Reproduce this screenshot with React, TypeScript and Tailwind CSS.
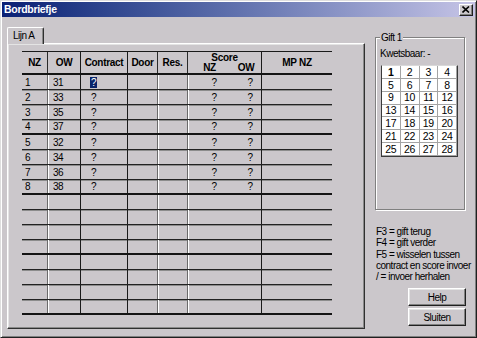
import React from "react";

const rows: { nz: string; ow: string }[] = [
  { nz: "1", ow: "31" },
  { nz: "2", ow: "33" },
  { nz: "3", ow: "35" },
  { nz: "4", ow: "37" },
  { nz: "5", ow: "32" },
  { nz: "6", ow: "34" },
  { nz: "7", ow: "36" },
  { nz: "8", ow: "38" },
  { nz: "", ow: "" },
  { nz: "", ow: "" },
  { nz: "", ow: "" },
  { nz: "", ow: "" },
  { nz: "", ow: "" },
  { nz: "", ow: "" },
  { nz: "", ow: "" },
  { nz: "", ow: "" },
];

function Row({ nz, ow, index }: { nz: string; ow: string; index: number }) {
  const thick = (index + 1) % 4 === 0;
  const filled = nz !== "";
  return (
    <div
      className={
        thick
          ? "flex h-[15px] border-b-2 border-b-[#141414]"
          : "flex h-[15px] border-b border-b-[#222222] shadow-[0_1px_0_#8c8c8c]"
      }
    >
      <div className="flex w-[26px] items-center border-r border-r-[#6a6a6a] pl-[3px]">{nz}</div>
      <div className="flex w-[33px] items-center border-l border-r border-l-white border-r-[#1a1a1a] pl-[4px]">{ow}</div>
      <div className="flex w-[47px] items-center border-r border-r-[#1a1a1a] pl-[9px]">
        {filled ? (
          index === 0 ? (
            <span className="bg-[#0a246a] px-[1px] leading-[11px] text-white">?</span>
          ) : (
            <span className="px-[1px]">?</span>
          )
        ) : null}
      </div>
      <div className="w-[30px] border-r border-r-[#6a6a6a]"></div>
      <div className="w-[30px] border-l border-r border-l-white border-r-[#6a6a6a]"></div>
      <div className="flex w-[74px] items-center border-l border-r border-l-white border-r-[#1a1a1a]">
        <span className="w-[50px] text-center">{filled ? "?" : ""}</span>
        <span className="w-[22px] text-center">{filled ? "?" : ""}</span>
      </div>
      <div className="w-[70px]"></div>
    </div>
  );
}

const btn =
  "flex h-[18px] w-[58px] items-center justify-center self-end border border-t-white border-l-white border-r-[#202020] border-b-[#202020] bg-[#cbc7cb] shadow-[inset_-1px_-1px_0_#808080,inset_1px_1px_0_#e4e4e4]";

export default function App() {
  return (
    <div className="h-[338px] w-[477px] overflow-hidden border border-t-[#dedede] border-l-[#dedede] border-r-[#202020] border-b-[#202020] bg-[#cbc7cb] p-[1px] font-['Liberation_Sans',Arial,sans-serif] text-[10px] tracking-[-0.5px] text-black shadow-[inset_1px_1px_0_#ffffff,inset_-1px_-1px_0_#808080]">
      {/* Title bar */}
      <div className="flex h-[15px] items-center justify-between bg-gradient-to-r from-[#0a1f74] to-[#c6c4e6] pl-[2px] pr-[2px]">
        <span className="text-[10.5px] font-bold leading-[13px] tracking-[-0.3px] text-white">Bordbriefje</span>
        <div className="flex h-[12px] w-[14px] items-center justify-center border border-t-white border-l-white border-r-[#202020] border-b-[#202020] bg-[#cbc7cb] shadow-[inset_-1px_-1px_0_#808080]">
          <svg width="8" height="7" viewBox="0 0 8 7">
            <path d="M0.5 0.5 L7 6.5 M7 0.5 L0.5 6.5" stroke="#000" strokeWidth="1.6" />
          </svg>
        </div>
      </div>

      {/* Body */}
      <div className="flex h-[319px] pl-[5px] pr-[9px]">
        {/* Left column: tab control */}
        <div className="flex w-[358px] flex-col pt-[10px]">
          <div className="relative z-10 -mb-[1px] flex h-[17px] w-[37px] items-center rounded-t-[2px] border-t border-l border-r border-t-white border-l-white border-r-[#303030] bg-[#cbc7cb] pb-[1px] pl-[5px] shadow-[inset_-1px_0_0_#8a8a8a]">
            Lijn A
          </div>
          <div className="h-[286px] w-[358px] border border-t-white border-l-white border-r-[#303030] border-b-[#303030] pl-[14px] pt-[7px] shadow-[inset_-1px_-1px_0_#8a8a8a,inset_1px_1px_0_#e4e4e4]">
            <div className="w-[310px]">
              {/* Header */}
              <div className="flex h-[24px] border-t border-b-2 border-t-[#1a1a1a] border-b-[#141414] font-bold tracking-[-0.3px]">
                <div className="flex w-[26px] items-center justify-center border-r border-r-[#2a2a2a]">NZ</div>
                <div className="flex w-[33px] items-center justify-center border-r border-r-[#1a1a1a]">OW</div>
                <div className="flex w-[47px] items-center justify-center border-r border-r-[#1a1a1a]">Contract</div>
                <div className="flex w-[30px] items-center justify-center border-r border-r-[#2a2a2a]">Door</div>
                <div className="flex w-[30px] items-center justify-center border-r border-r-[#2a2a2a]">Res.</div>
                <div className="flex w-[74px] flex-col border-r border-r-[#1a1a1a] pt-[1px] leading-[10px]">
                  <div className="text-center">Score</div>
                  <div className="flex">
                    <span className="w-[43px] text-center">NZ</span>
                    <span className="w-[30px] text-center">OW</span>
                  </div>
                </div>
                <div className="flex w-[70px] items-center justify-center">MP NZ</div>
              </div>
              {rows.map((r, i) => (
                <Row key={i} nz={r.nz} ow={r.ow} index={i} />
              ))}
            </div>
          </div>
        </div>

        {/* Right column */}
        <div className="ml-[10px] flex w-[91px] flex-col">
          <div className="relative mt-[20px] h-[173px] w-[90px] border border-[#808080] pl-[4px] pt-[9px] shadow-[inset_1px_1px_0_#ffffff,1px_1px_0_#ffffff]">
            <span className="absolute -top-[7px] left-[4px] bg-[#cbc7cb] px-[1px] leading-[13px]">Gift 1</span>
            <div className="leading-[13px]">Kwetsbaar: -</div>
            <div className="ml-[1px] mt-[5px] grid h-[92px] w-[77px] grid-cols-4 grid-rows-7 border border-[#3a3a3a] border-t-[#d8d8d8] bg-white text-[10.5px] tracking-[-0.3px]">
              {Array.from({ length: 28 }, (_, i) => (
                <div
                  key={i}
                  className={
                    i === 0
                      ? "flex items-center justify-center border-b border-r border-b-[#a4a4a4] border-r-[#a4a4a4] font-bold leading-none"
                      : "flex items-center justify-center border-b border-r border-b-[#a4a4a4] border-r-[#a4a4a4] leading-none"
                  }
                >
                  {i + 1}
                </div>
              ))}
            </div>
          </div>

          <div className="mt-[16px] whitespace-nowrap pl-[1px] leading-[11.25px]">
            <div>F3 = gift terug</div>
            <div>F4 = gift verder</div>
            <div>F5 = wisselen tussen</div>
            <div>contract en score invoer</div>
            <div>/ = invoer herhalen</div>
          </div>

          <button className={`mt-[6px] ${btn}`}>Help</button>
          <button className={`mt-[2px] ${btn}`}>Sluiten</button>
        </div>
      </div>
    </div>
  );
}
